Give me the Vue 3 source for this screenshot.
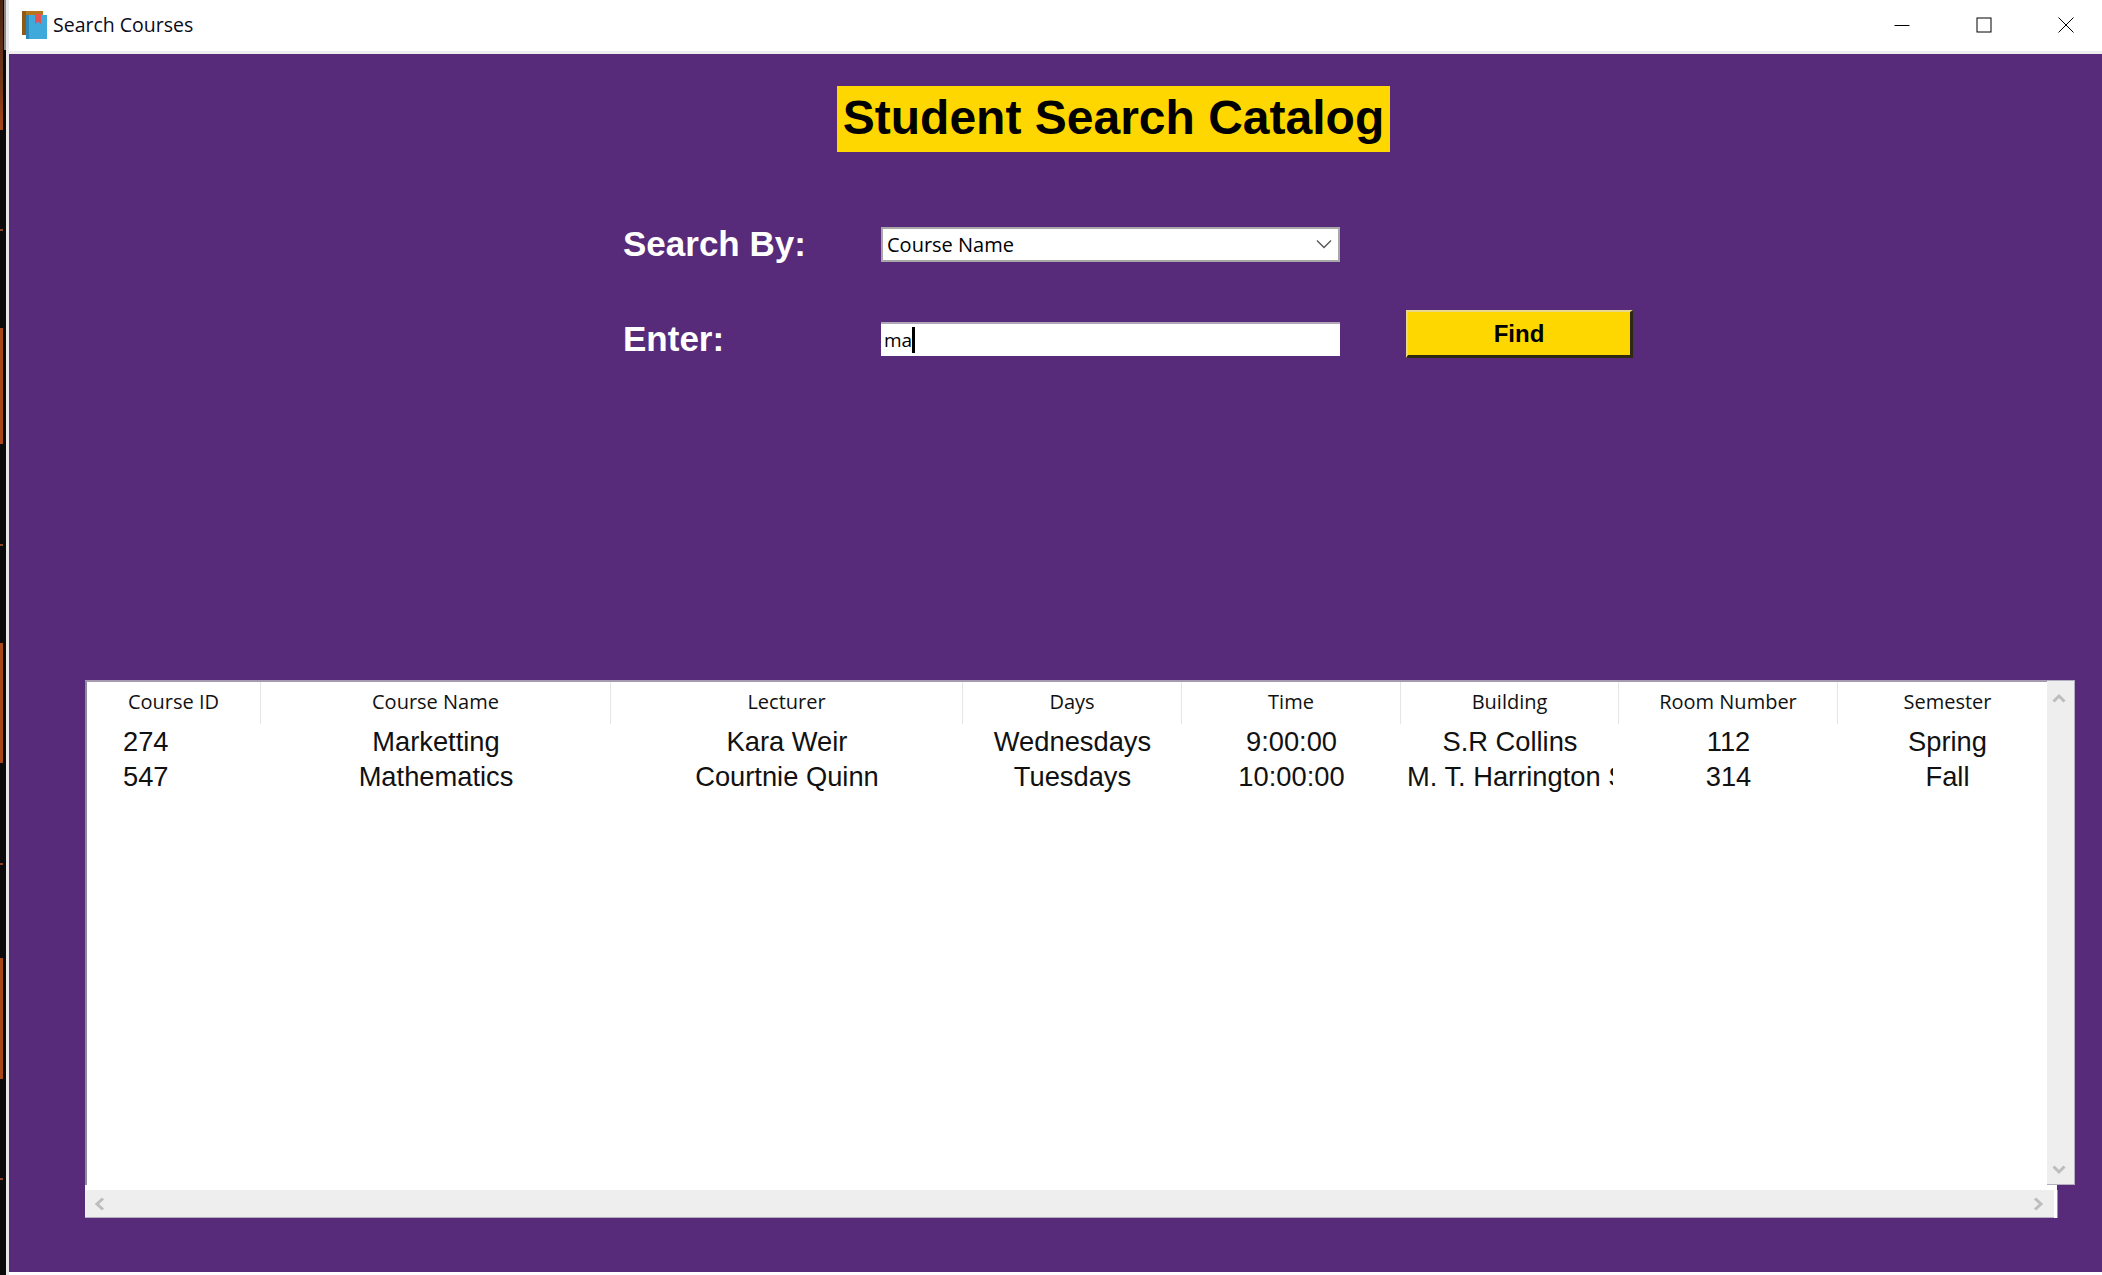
<script setup>
const columns = [
  { title: "Course ID", width: 174 },
  { title: "Course Name", width: 350 },
  { title: "Lecturer", width: 352 },
  { title: "Days", width: 219 },
  { title: "Time", width: 219 },
  { title: "Building", width: 218 },
  { title: "Room Number", width: 219 },
  { title: "Semester", width: 219 }
];

const rows = [
  ["274", "Marketting", "Kara Weir", "Wednesdays", "9:00:00", "S.R Collins", "112", "Spring"],
  ["547", "Mathematics", "Courtnie Quinn", "Tuesdays", "10:00:00", "M. T. Harrington S", "314", "Fall"]
];

const gridColumns = columns.map(c => c.width + "px").join(" ");
</script>

<template>
  <div class="screen">
    <div class="desktop-edge">
      <span class="edge-bar"></span>
      <span class="patch p1"></span>
      <span class="patch p2"></span>
      <span class="patch p3"></span>
      <span class="patch p4"></span>
      <span class="tick t1"></span>
      <span class="tick t2"></span>
      <span class="tick t3"></span>
      <span class="tick t4"></span>
    </div>
    <div class="window">
      <header class="titlebar">
        <svg class="app-icon" width="25" height="28" viewBox="0 0 25 28">
          <path d="M0 0h21v24H0z" fill="#b8761c" />
          <path d="M0 0h4v24H0z" fill="#8f5a16" />
          <path d="M4 4h21v24H4z" fill="#3fa9dc" />
          <path d="M4 4h3v24H4z" fill="#2b87b8" />
          <path d="M13 3h6v10l-3-2.500L13 13z" fill="#e8504f" />
        </svg>
        <span class="title-text">Search Courses</span>
        <div class="window-controls">
          <svg width="16" height="16" viewBox="0 0 16 16"><path d="M0.500 8.500h15" stroke="#000" fill="none" /></svg>
          <svg width="16" height="16" viewBox="0 0 16 16"><rect x="1" y="1" width="14" height="14" stroke="#000" fill="none" /></svg>
          <svg width="16" height="16" viewBox="0 0 16 16"><path d="M0.500 0.500l15 15M15.500 0.500l-15 15" stroke="#000" fill="none" /></svg>
        </div>
      </header>

      <main class="content">
        <h1 class="heading">Student Search Catalog</h1>

        <div class="form">
          <div class="form-row row-select">
            <label class="label">Search By:</label>
            <div class="select">
              <span>Course Name</span>
              <svg width="16" height="10" viewBox="0 0 16 10"><path d="M1 1.500l7 7 7-7" stroke="#555" stroke-width="1.300" fill="none" /></svg>
            </div>
          </div>
          <div class="form-row row-enter">
            <label class="label">Enter:</label>
            <div class="input"><span>ma</span><i class="caret"></i></div>
            <button class="find">Find</button>
          </div>
        </div>

        <section class="list-area">
          <div class="list-top">
            <div class="list">
              <div class="list-head" :style="{ gridTemplateColumns: gridColumns }">
                <div v-for="col in columns" :key="col.title" class="head-cell">{{ col.title }}</div>
              </div>
              <div v-for="row in rows" :key="row[0]" class="list-row" :style="{ gridTemplateColumns: gridColumns }">
                <div v-for="(cell, i) in row" :key="i" class="cell" :class="{ first: i === 0 }"><span class="cell-text">{{ cell }}</span></div>
              </div>
            </div>
            <div class="vbar">
              <svg width="14" height="10" viewBox="0 0 14 10"><path d="M1.500 8.500L7 3 12.500 8.500" stroke="#bdbdbd" stroke-width="3" fill="none" /></svg>
              <svg width="14" height="10" viewBox="0 0 14 10"><path d="M1.500 1.500L7 7 12.500 1.500" stroke="#bdbdbd" stroke-width="3" fill="none" /></svg>
            </div>
          </div>
          <div class="list-gap"></div>
          <div class="hbar">
            <svg width="12" height="14" viewBox="0 0 12 14"><path d="M10 1.500L4 7l6 5.500" stroke="#bdbdbd" stroke-width="3" fill="none" /></svg>
            <svg width="12" height="14" viewBox="0 0 12 14"><path d="M2 1.500L8 7l-6 5.500" stroke="#bdbdbd" stroke-width="3" fill="none" /></svg>
          </div>
        </section>
      </main>
    </div>
  </div>
</template>

<style>
html, body {
  margin: 0;
  background: #fff;
  overflow: hidden;
}
</style>

<style scoped>
.screen {
  display: flex;
  width: 2102px;
  height: 1275px;
  overflow: hidden;
  font-family: "Liberation Sans", Arial, sans-serif;
}

.desktop-edge {
  position: relative;
  width: 6px;
  flex: none;
  background: #0a0a0a;
  border-right: 3px solid #e9e9e9;
}

.edge-bar {
  position: absolute;
  left: 4px;
  top: 0;
  width: 2px;
  height: 50px;
  background: #8a8a8a;
}

.patch {
  position: absolute;
  left: 0;
  width: 3px;
  background: #a8481a;
}
.p1 { top: 0; height: 130px; background: linear-gradient(#4a2412, #7a3a18 70%, #a8481a); }
.p2 { top: 328px; height: 116px; }
.p3 { top: 643px; height: 120px; }
.p4 { top: 958px; height: 121px; }

.tick {
  position: absolute;
  left: 0;
  width: 3px;
  height: 2px;
  background: #8a4420;
}
.t1 { top: 229px; }
.t2 { top: 544px; }
.t3 { top: 863px; }
.t4 { top: 1178px; }

.window {
  flex: 1;
  display: flex;
  flex-direction: column;
  min-width: 0;
}

.titlebar {
  height: 49px;
  flex: none;
  display: flex;
  align-items: center;
  background: #fff;
  padding-left: 13px;
  padding-bottom: 2px;
  border-bottom: 3px solid #eeeeee;
}

.app-icon {
  flex: none;
  margin-right: 6px;
}

.title-text {
  font-family: "Open Sans", sans-serif;
  font-size: 19.500px;
  color: #0b0b1a;
}

.window-controls {
  margin-left: auto;
  display: flex;
  gap: 66px;
  padding-right: 28px;
  align-items: center;
}

.content {
  flex: 1;
  background: #582b7a;
  display: flex;
  flex-direction: column;
  margin-bottom: 3px;
}

.heading {
  align-self: flex-start;
  margin: 32px 0 0 828px;
  width: 553px;
  height: 66px;
  background: #ffd700;
  color: #000;
  font-size: 48px;
  font-weight: 700;
  line-height: 64px;
  text-align: center;
  white-space: nowrap;
}

.form {
  display: flex;
  flex-direction: column;
  margin-left: 614px;
  margin-top: 72px;
}

.form-row {
  display: flex;
  align-items: center;
}

.row-enter {
  margin-top: 46px;
  height: 48px;
}

.label {
  width: 259px;
  flex: none;
  color: #fff;
  font-size: 35px;
  font-weight: 700;
}

.row-enter .label {
  padding-top: 10px;
}

.select {
  width: 459px;
  height: 35px;
  box-sizing: border-box;
  margin-left: -1px;
  background: #fff;
  border: 2px solid #a8a8a8;
  display: flex;
  align-items: center;
  justify-content: space-between;
  padding: 0 6px 0 4px;
  font-family: "Open Sans", sans-serif;
  font-size: 20px;
  color: #000;
}

.input {
  width: 459px;
  height: 34px;
  box-sizing: border-box;
  margin-top: 9px;
  margin-left: -1px;
  background: #fff;
  border-top: 2px solid #b0a8b8;
  display: flex;
  align-items: center;
  padding-left: 3px;
  font-family: "Open Sans", sans-serif;
  font-size: 19px;
  color: #000;
}

.caret {
  width: 3px;
  height: 26px;
  background: #000;
}

.find {
  width: 227px;
  height: 48px;
  margin-left: 66px;
  background: #ffd700;
  border: none;
  border-top: 2px solid #e8d98a;
  border-left: 2px solid #e8d98a;
  border-right: 3px solid #2e2a10;
  border-bottom: 3px solid #2e2a10;
  font-family: "Liberation Sans", Arial, sans-serif;
  font-size: 24px;
  font-weight: 700;
  color: #000;
  padding: 0;
}

.list-area {
  display: flex;
  flex-direction: column;
  margin-left: 76px;
  margin-top: 322px;
}

.list-top {
  display: flex;
  height: 505px;
}

.list {
  width: 1962px;
  box-sizing: border-box;
  background: #fff;
  border-left: 2px solid #8c8c9c;
  border-top: 2px solid #a59ab0;
  overflow: hidden;
}

.list-head {
  display: grid;
  height: 42px;
}

.head-cell {
  font-family: "Open Sans", sans-serif;
  font-size: 20px;
  color: #111;
  text-align: center;
  line-height: 40px;
  border-right: 1px solid #e5e5e5;
  white-space: nowrap;
}
.head-cell:last-child {
  border-right: none;
}

.list-row {
  display: grid;
  height: 35px;
}

.cell {
  font-size: 27.300px;
  line-height: 35px;
  color: #111;
  text-align: center;
  white-space: nowrap;
  overflow: hidden;
  padding: 0 6px;
  box-sizing: border-box;
}

.cell-text {
  display: block;
  overflow: hidden;
}

.cell.first {
  text-align: left;
  padding-left: 36px;
}

.vbar {
  width: 28px;
  background: #eeeeee;
  display: flex;
  flex-direction: column;
  align-items: center;
  justify-content: space-between;
  padding: 12px 3px 9px 0;
  box-sizing: border-box;
  border-top: 1px solid #b5aec0;
  border-right: 1px solid #b5aec0;
  border-bottom: 1px solid #b5aec0;
}

.list-gap {
  width: 1972px;
  height: 5px;
  background: #fff;
}

.hbar {
  width: 1969px;
  height: 28px;
  box-sizing: border-box;
  background: #eeeeee;
  border-bottom: 1px solid #b5aec0;
  box-shadow: 3px 0 0 #fff, 4px 0 0 #9a90a8;
  display: flex;
  align-items: center;
  justify-content: space-between;
  padding: 0 9px 0 8px;
}
</style>
